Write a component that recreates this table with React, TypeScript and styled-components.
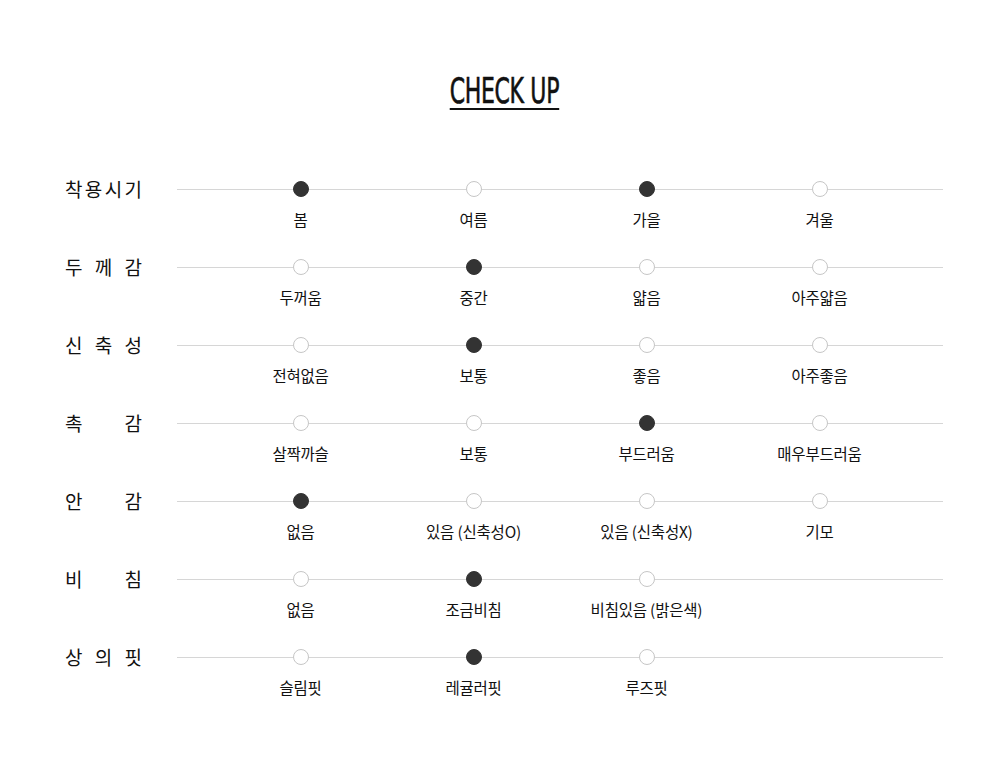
import styled, { createGlobalStyle } from 'styled-components'

type Item = { name: string; on?: boolean }
type Spec = { label: string; items: Item[] }

const specs: Spec[] = [
  { label: '착용시기', items: [{ name: '봄', on: true }, { name: '여름' }, { name: '가을', on: true }, { name: '겨울' }] },
  { label: '두께감', items: [{ name: '두꺼움' }, { name: '중간', on: true }, { name: '얇음' }, { name: '아주얇음' }] },
  { label: '신축성', items: [{ name: '전혀없음' }, { name: '보통', on: true }, { name: '좋음' }, { name: '아주좋음' }] },
  { label: '촉감', items: [{ name: '살짝까슬' }, { name: '보통' }, { name: '부드러움', on: true }, { name: '매우부드러움' }] },
  { label: '안감', items: [{ name: '없음', on: true }, { name: '있음 (신축성O)' }, { name: '있음 (신축성X)' }, { name: '기모' }] },
  { label: '비침', items: [{ name: '없음' }, { name: '조금비침', on: true }, { name: '비침있음 (밝은색)' }] },
  { label: '상의핏', items: [{ name: '슬림핏' }, { name: '레귤러핏', on: true }, { name: '루즈핏' }] },
]

const GlobalStyle = createGlobalStyle`
  body {
    margin: 0;
    background: #fff;
    font-family: 'Noto Sans CJK KR', 'Noto Sans', sans-serif;
    color: #111;
  }
`

const Page = styled.div`
  width: 1000px;
  height: 777px;
  padding: 0 57px 0 65px;
  box-sizing: border-box;
  overflow: hidden;
`

const Header = styled.div`
  display: flex;
  justify-content: center;
  padding: 73px 0 0 0;
  height: 181px;
  box-sizing: border-box;
`

const Title = styled.h2`
  margin: 0;
  display: inline-block;
  height: 35px;
  font-family: 'DejaVu Sans Condensed', 'DejaVu Sans', sans-serif;
  font-size: 36px;
  font-weight: 400;
  line-height: 36px;
  color: #111;
  -webkit-text-stroke: 0.6px #111;
  border-bottom: 2px solid #111;
  transform: scaleX(0.68);
  letter-spacing: -0.5px;
`

const List = styled.div`
  display: flex;
  flex-direction: column;
`

const Row = styled.div`
  display: grid;
  grid-template-columns: 77px 1fr;
  column-gap: 35px;
  height: 78px;
`

const Label = styled.div`
  display: flex;
  justify-content: space-between;
  height: 16px;
  line-height: 16px;
  font-size: 19px;
  color: #111;
`

const Track = styled.div`
  position: relative;
  display: grid;
  grid-template-columns: repeat(4, 173px);
  padding: 0 37px;

  &::before {
    content: '';
    position: absolute;
    left: 0;
    right: 0;
    top: 8px;
    height: 1px;
    background: #d6d6d6;
  }
`

const Option = styled.div`
  position: relative;
  display: flex;
  flex-direction: column;
  align-items: center;
`

const Dot = styled.span<{ $on?: boolean }>`
  width: 16px;
  height: 16px;
  border-radius: 50%;
  box-sizing: border-box;
  background: ${p => (p.$on ? '#333' : '#fff')};
  border: 1px solid ${p => (p.$on ? '#333' : '#c6c6c6')};
`

const OptionName = styled.span`
  margin-top: 12px;
  font-size: 15.5px;
  line-height: 20px;
  color: #111;
  white-space: nowrap;
  letter-spacing: -0.2px;
`

export default function App() {
  return (
    <Page>
      <GlobalStyle />
      <Header>
        <Title>CHECK UP</Title>
      </Header>
      <List>
        {specs.map(s => (
          <Row key={s.label}>
            <Label>
              {s.label.split('').map((c, i) => (
                <span key={i}>{c}</span>
              ))}
            </Label>
            <Track>
              {s.items.map(it => (
                <Option key={it.name}>
                  <Dot $on={it.on} />
                  <OptionName>{it.name}</OptionName>
                </Option>
              ))}
            </Track>
          </Row>
        ))}
      </List>
    </Page>
  )
}
